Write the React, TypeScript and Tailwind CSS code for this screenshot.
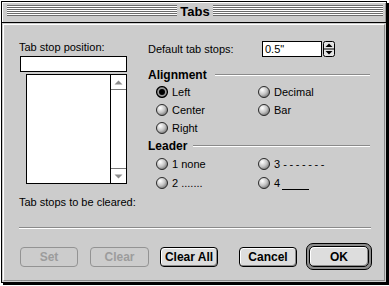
import React from "react";

function Radio({ checked }: { checked?: boolean }) {
  return (
    <svg width="12" height="12" viewBox="0 0 12 12" className="shrink-0">
      <defs>
        <radialGradient id="rgrad" cx="35%" cy="32%" r="75%">
          <stop offset="0" stopColor="#ffffff" />
          <stop offset="0.55" stopColor="#c4c4c4" />
          <stop offset="1" stopColor="#6f6f6f" />
        </radialGradient>
      </defs>
      {checked ? (
        <>
          <circle cx="6" cy="6" r="5.4" fill="#9a9a9a" stroke="#000" strokeWidth="1.3" />
          <circle cx="6" cy="6" r="3" fill="#000" />
        </>
      ) : (
        <circle cx="6" cy="6" r="5.5" fill="url(#rgrad)" stroke="#2a2a2a" strokeWidth="1" />
      )}
    </svg>
  );
}

function RadioRow({ label, checked, h19 }: { label: React.ReactNode; checked?: boolean; h19?: boolean }) {
  return (
    <div className={h19 ? "h-[19px] flex items-center gap-[4px] text-[11px] leading-[14px] whitespace-nowrap" : "h-[18px] flex items-center gap-[4px] text-[11px] leading-[14px] whitespace-nowrap"}>
      <Radio checked={checked} />
      <span>{label}</span>
    </div>
  );
}

function Stripes() {
  return (
    <div className="flex-1 h-[11px] mt-[3px] bg-[repeating-linear-gradient(to_bottom,#6b6b6b_0px,#6b6b6b_1px,#ffffff_1px,#ffffff_2px)]" />
  );
}

function Stepper() {
  return (
    <svg width="12" height="16" viewBox="0 0 12 16" className="ml-px shrink-0">
      <rect x="0.5" y="0.5" width="11" height="15" rx="2" fill="#e4e4e4" stroke="#000" />
      <line x1="0.5" y1="8" x2="11.5" y2="8" stroke="#000" />
      <path d="M6 2.5 L9.5 6 L2.5 6 Z" fill="#000" />
      <path d="M2.5 10 L9.5 10 L6 13.5 Z" fill="#000" />
    </svg>
  );
}

function HeaderLine() {
  return <div className="flex-1 h-[2px] border-t border-[#8a8a8a] border-b border-b-white" />;
}

export default function App() {
  return (
    <div className="w-[389px] h-[286px] bg-white pt-px pl-px font-['Liberation_Sans',Arial,sans-serif] text-black">
      <div className="w-[386px] h-[282px] border border-black bg-[#cccccc] shadow-[2px_2px_0_#000] flex flex-col">
        {/* Title bar */}
        <div className="h-[21px] shrink-0 border-b border-black flex items-start pl-[5px] pr-[3px] shadow-[inset_1px_1px_0_#ffffff,inset_-1px_0_0_#999999]">
          <Stripes />
          <div className="w-[36px] h-[20px] text-center text-[13px] font-bold leading-[20px]">Tabs</div>
          <Stripes />
        </div>

        {/* Content */}
        <div className="flex-1 p-px">
          <div className="h-full border border-t-white border-l-white border-r-[#8a8a8a] border-b-[#8a8a8a] pl-[15px] pt-[15px] flex flex-col">
            <div className="flex">
              {/* Left column */}
              <div className="w-[108px] shrink-0 flex flex-col">
                <div className="h-[14px] text-[11px] leading-[14px] whitespace-nowrap">Tab stop position:</div>
                <div className="mt-[2px] ml-px w-[107px] h-[16px] bg-white border border-black" />
                <div className="mt-[2px] ml-[7px] w-[101px] h-[110px] bg-white border border-black flex justify-end">
                  <div className="w-[16px] h-full border-l border-black flex flex-col justify-between">
                    <div className="h-[15px] border-b border-[#777777] flex items-center justify-center">
                      <svg width="9" height="5" viewBox="0 0 9 5">
                        <path d="M4.5 0.5 L8.5 4.5 L0.5 4.5 Z" fill="#8c8c8c" />
                      </svg>
                    </div>
                    <div className="h-[15px] border-t border-[#777777] flex items-center justify-center">
                      <svg width="9" height="5" viewBox="0 0 9 5">
                        <path d="M0.5 0.5 L8.5 0.5 L4.5 4.5 Z" fill="#8c8c8c" />
                      </svg>
                    </div>
                  </div>
                </div>
                <div className="mt-[11px] h-[14px] text-[11px] leading-[14px] whitespace-nowrap">Tab stops to be cleared:</div>
              </div>

              {/* Right column */}
              <div className="ml-[21px] w-[222px] shrink-0 flex flex-col">
                <div className="mt-px h-[16px] flex items-center">
                  <div className="w-[114px] text-[11px] leading-[14px] whitespace-nowrap">Default tab stops:</div>
                  <div className="w-[60px] h-[16px] bg-white border border-black text-[11px] leading-[14px] pl-[2px]">0.5"</div>
                  <Stepper />
                </div>

                <div className="mt-[11px] h-[14px] flex items-center gap-[8px]">
                  <span className="text-[12px] font-bold leading-[14px]">Alignment</span>
                  <HeaderLine />
                </div>
                <div className="mt-px pl-[8px] grid grid-cols-[102px_1fr]">
                  <RadioRow label="Left" checked />
                  <RadioRow label="Decimal" />
                  <RadioRow label="Center" />
                  <RadioRow label="Bar" />
                  <RadioRow label="Right" />
                </div>

                <div className="mt-[2px] h-[14px] flex items-center gap-[6px]">
                  <span className="text-[12px] font-bold leading-[14px]">Leader</span>
                  <HeaderLine />
                </div>
                <div className="mt-px pl-[8px] grid grid-cols-[102px_1fr]">
                  <RadioRow h19 label="1 none" />
                  <RadioRow h19 label={<span>3 <span className="tracking-[2.6px]">-------</span></span>} />
                  <RadioRow h19 label={<span>2 .......</span>} />
                  <RadioRow
                    h19
                    label={
                      <span className="flex items-end">
                        4<span className="ml-[2px] w-[27px] h-[10px] border-b border-black" />
                      </span>
                    }
                  />
                </div>
              </div>
            </div>

            <div className="mt-[18px] w-[352px] h-[2px] border-t border-[#8a8a8a] border-b border-b-white" />

            <div className="mt-[14px] flex items-start">
              <div className="ml-px mt-[4px] w-[58px] h-[20px] rounded-[4px] border border-[#939393] flex items-center justify-center text-[12px] font-bold text-[#9c9c9c]">Set</div>
              <div className="ml-[12px] mt-[4px] w-[59px] h-[20px] rounded-[4px] border border-[#939393] flex items-center justify-center text-[12px] font-bold text-[#9c9c9c]">Clear</div>
              <div className="ml-[11px] mt-[4px] w-[58px] h-[20px] rounded-[4px] border border-black bg-[#dddddd] shadow-[inset_1px_1px_0_#ffffff,inset_-1px_-1px_0_#8a8a8a] flex items-center justify-center text-[12px] font-bold">Clear All</div>
              <div className="ml-[21px] mt-[4px] w-[58px] h-[20px] rounded-[4px] border border-black bg-[#dddddd] shadow-[inset_1px_1px_0_#ffffff,inset_-1px_-1px_0_#8a8a8a] flex items-center justify-center text-[12px] font-bold">Cancel</div>
              <div className="ml-[9px] w-[66px] h-[27px] rounded-[7px] border border-black bg-[#8c8c8c] p-[2px]">
                <div className="w-full h-full rounded-[5px] border border-black bg-[#dddddd] shadow-[inset_1px_1px_0_#ffffff,inset_-1px_-1px_0_#8a8a8a] flex items-center justify-center text-[12px] font-bold">OK</div>
              </div>
            </div>
          </div>
        </div>
      </div>
    </div>
  );
}
